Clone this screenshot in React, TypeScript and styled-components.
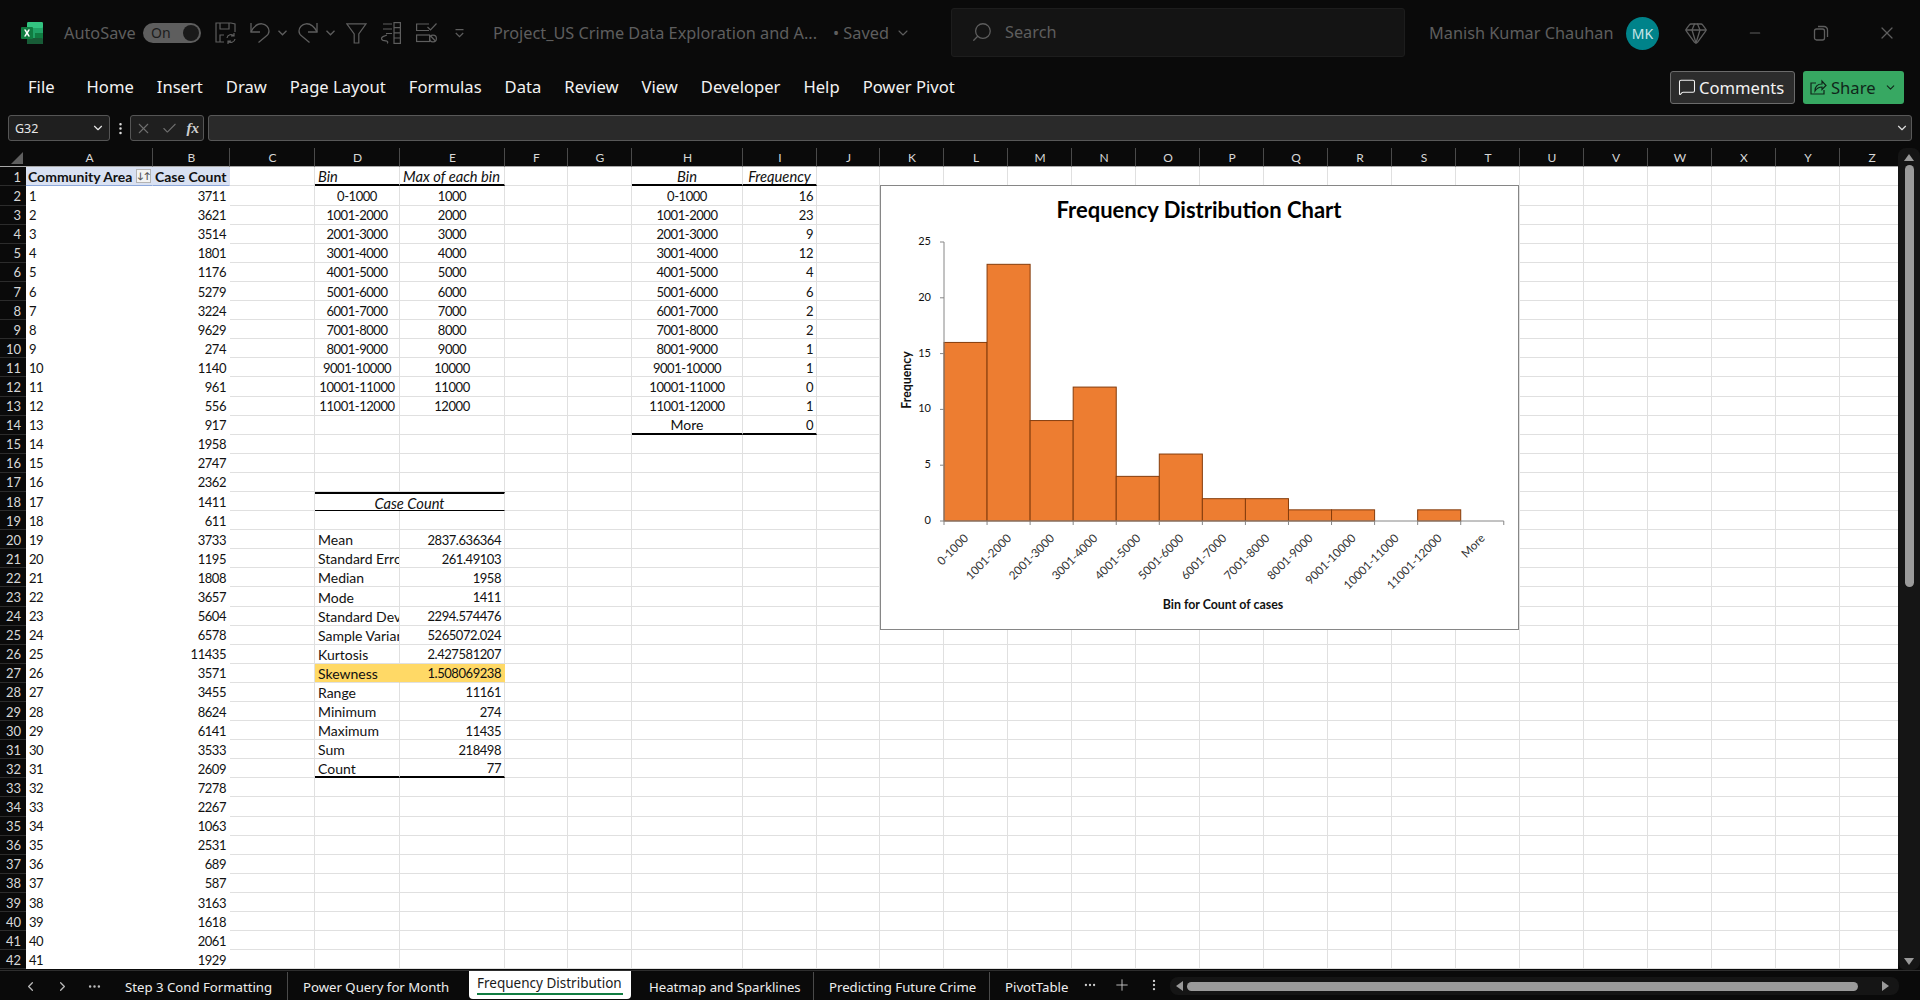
import React from 'react';
import styled, { createGlobalStyle } from 'styled-components';
import { ChevronDown, X, Check, Search, Minus, Plus, ChevronLeft, ChevronRight, MoreHorizontal, MoreVertical, Gem, MessageSquare } from 'lucide-react';

const UI_FONT = '"Noto Sans", "Open Sans", sans-serif';
const CELL_FONT = 'Lato, "Open Sans", sans-serif';

const GlobalStyle = createGlobalStyle`
  html, body {
    margin: 0;
    padding: 0;
    background: #0a0a0a;
    overflow: hidden;
  }
  * { box-sizing: border-box; }
`;

const Root = styled.div`
  width: 1920px;
  height: 1000px;
  background: #0a0a0a;
  display: flex;
  flex-direction: column;
  font-family: ${UI_FONT};
  overflow: hidden;
`;

/* title bar */
const TitleBar = styled.div`
  height: 66px;
  display: flex;
  align-items: center;
  color: #5e5e5e;
  font-size: 16.3px;
  padding-left: 21px;
`;

const AutoSave = styled.span`
  margin-left: 21px;
  width: 79px;
  white-space: nowrap;
`;

const Toggle = styled.div`
  width: 58px;
  height: 20px;
  border-radius: 10px;
  background: #5e5e5e;
  color: #1c1c1c;
  font-size: 14px;
  line-height: 20px;
  padding-left: 8px;
  position: relative;
`;

const Knob = styled.span`
  position: absolute;
  right: 2px;
  top: 2px;
  width: 16px;
  height: 16px;
  border-radius: 50%;
  background: #1a1a1a;
`;

const QuickIcons = styled.div`
  display: flex;
  align-items: center;
  margin-left: 14px;
  width: 278px;
`;

const QuickSlot = styled.span<{ $w: number }>`
  width: ${(p) => p.$w}px;
  display: flex;
  align-items: center;
`;

const DocTitle = styled.span`
  width: 340px;
  white-space: nowrap;
`;

const SavedLabel = styled.span`
  width: 62px;
  white-space: nowrap;
`;

const SearchBox = styled.div`
  margin-left: 40px;
  margin-bottom: 1px;
  width: 454px;
  height: 49px;
  background: #141414;
  border: 1px solid #1d1d1d;
  border-radius: 3px;
  display: flex;
  align-items: center;
  gap: 12px;
  padding: 0 0 2px 19px;
`;

const UserName = styled.span`
  margin-left: 24px;
  width: 197px;
  white-space: nowrap;
`;

const Avatar = styled.div`
  width: 33px;
  height: 33px;
  border-radius: 50%;
  background: #00838a;
  color: #c9e6e8;
  display: flex;
  align-items: center;
  justify-content: center;
  font-size: 14px;
`;

const WindowIcons = styled.div`
  display: flex;
  align-items: center;
  margin-left: 25px;
`;

const WindowSlot = styled.span<{ $w: number }>`
  width: ${(p) => p.$w}px;
  display: flex;
  align-items: center;
`;

/* ribbon tabs */
const RibbonBar = styled.div`
  height: 42px;
  display: flex;
  align-items: center;
  padding-left: 28px;
  color: #f2f2f2;
  font-size: 16.6px;
`;

const RibbonTab = styled.span<{ $first?: boolean }>`
  margin-right: ${(p) => (p.$first ? 32 : 23)}px;
  margin-bottom: 1px;
  white-space: nowrap;
`;

const RibbonActions = styled.div`
  margin-left: auto;
  display: flex;
  gap: 8px;
  padding-right: 16px;
`;

const CommentsButton = styled.div`
  width: 125px;
  height: 33px;
  border: 1px solid #6b6b6b;
  border-radius: 3px;
  background: #2c2c2c;
  color: #f2f2f2;
  display: flex;
  align-items: center;
  gap: 3px;
  padding-left: 7px;
  font-size: 16.6px;
`;

const ShareButton = styled.div`
  width: 101px;
  height: 33px;
  border-radius: 3px;
  background: #37a862;
  color: #10261a;
  display: flex;
  align-items: center;
  gap: 4px;
  padding-left: 7px;
  font-size: 16.6px;
`;

const ShareLabel = styled.span`
  width: 49px;
`;

/* formula bar */
const FormulaRow = styled.div`
  height: 26px;
  margin-top: 7px;
  display: flex;
  align-items: stretch;
  padding-left: 8px;
  padding-right: 8px;
`;

const NameBox = styled.div`
  width: 102px;
  background: #1f1f1f;
  border: 1px solid #555;
  border-radius: 3px;
  color: #e6e6e6;
  font-size: 12.5px;
  display: flex;
  align-items: center;
  justify-content: space-between;
  padding: 0 4px 0 6px;
`;

const Kebab = styled.div`
  width: 20px;
  color: #ddd;
  display: flex;
  align-items: center;
  justify-content: center;
`;

const FxBox = styled.div`
  width: 74px;
  background: #1f1f1f;
  border: 1px solid #555;
  border-radius: 3px;
  display: flex;
  align-items: center;
  justify-content: space-between;
  padding: 0 4px 0 4px;
  color: #6f6f6f;
`;

const FxLabel = styled.span`
  font-family: "Liberation Serif", serif;
  font-style: italic;
  font-weight: 700;
  font-size: 15px;
  color: #cfcfcf;
`;

const FormulaInput = styled.div`
  flex: 1;
  margin-left: 4px;
  background: #2a2a2a;
  border: 1px solid #585858;
  border-radius: 3px;
  color: #ddd;
  display: flex;
  align-items: center;
  justify-content: flex-end;
  padding-right: 2px;
`;

/* sheet */
const SheetWrap = styled.div`
  margin-top: 7px;
  height: 822px;
  display: flex;
`;

const SheetArea = styled.div`
  width: 1898px;
  position: relative;
  overflow: hidden;
`;

const Scrollbar = styled.div`
  width: 22px;
  display: flex;
  flex-direction: column;
  align-items: center;
  background: #151515;
  border-radius: 8px;
  padding-top: 6px;
  height: 822px;
`;

const ScrollThumb = styled.div`
  width: 9px;
  height: 422px;
  margin-top: 4px;
  background: #9a9a9a;
  border-radius: 5px;
`;

const ScrollArrow = styled.span<{ $down?: boolean }>`
  width: 0;
  height: 0;
  border-left: 5px solid transparent;
  border-right: 5px solid transparent;
  ${(p) => (p.$down ? 'border-top: 7px solid #999; margin-top: auto; margin-bottom: 5px;' : 'border-bottom: 7px solid #999;')}
`;

const Grid = styled.div`
  display: grid;
  width: max-content;
  grid-template-columns: 26px 127px 77px 85px 85px 105px 63px 64px 111px 74px 63px repeat(16, 64px);
  grid-template-rows: 19.4px repeat(42, 19.1px);
  font-family: ${CELL_FONT};
  font-size: 14px;
  color: #111;
  background: #fff;
`;

const Corner = styled.div`
  background: #0a0a0a;
  border-bottom: 1px solid #a8a8a8;
  position: relative;
`;

const CornerMark = styled.span`
  position: absolute;
  right: 3px;
  bottom: 2px;
  width: 0;
  height: 0;
  border-left: 12px solid transparent;
  border-bottom: 12px solid #5f5f5f;
`;

const ColHead = styled.div`
  background: #0a0a0a;
  border-bottom: 1px solid #a8a8a8;
  border-right: 1px solid #4a4a4a;
  color: #d8d8d8;
  font-size: 12px;
  padding-left: 1px;
  display: flex;
  align-items: center;
  justify-content: center;
`;

const RowHead = styled.div`
  background: #0a0a0a;
  border-bottom: 1px solid #2c2c2c;
  color: #d8d8d8;
  font-size: 13px;
  display: flex;
  align-items: center;
  justify-content: flex-end;
  padding: 1px 5px 0 0;
`;

type Align = 'left' | 'right' | 'center';

const Cell = styled.div<{
  $align?: Align;
  $plain?: boolean;
  $fill?: string;
  $top?: number;
  $bottom?: number;
  $italic?: boolean;
  $bold?: boolean;
  $num?: boolean;
  $span?: number;
}>`
  position: relative;
  display: flex;
  align-items: center;
  padding: 1px 3px 0;
  overflow: hidden;
  white-space: nowrap;
  grid-column: span ${(p) => p.$span ?? 1};
  justify-content: ${(p) => (p.$align === 'right' ? 'flex-end' : p.$align === 'center' ? 'center' : 'flex-start')};
  background: ${(p) => p.$fill ?? '#fff'};
  font-size: ${(p) => (p.$num ? '13px' : p.$italic ? '14.7px' : '14px')};
  letter-spacing: ${(p) => (p.$num ? '-0.45px' : 'normal')};
  font-style: ${(p) => (p.$italic ? 'italic' : 'normal')};
  font-weight: ${(p) => (p.$bold ? 700 : 400)};
  border-right: 1px solid ${(p) => (p.$plain || p.$fill ? 'transparent' : '#e0e0e0')};
  border-bottom: ${(p) => (p.$bottom ? `${p.$bottom}px solid #000` : `1px solid ${p.$plain ? 'transparent' : '#e0e0e0'}`)};
  ${(p) => (p.$top ? `border-top: ${p.$top}px solid #000;` : '')}
`;

const HeaderCell = styled(Cell)`
  background: #d9e1f2;
  border-bottom: 1px solid #8ea9db;
  padding-left: 2px;
`;

const SortButton = styled.span`
  position: absolute;
  right: 1px;
  top: 2px;
  width: 15px;
  height: 14px;
  background: #f3f3f3;
  border: 1px solid #b4b4b4;
  color: #555;
  font-size: 9px;
  line-height: 11px;
  text-align: center;
`;

/* chart */
const ChartFrame = styled.div`
  position: absolute;
  left: 880px;
  top: 37px;
  width: 639px;
  height: 445px;
  background: #fff;
  border: 1px solid #868686;
`;

/* sheet tabs */
const TabBar = styled.div`
  height: 30px;
  display: flex;
  align-items: flex-start;
  color: #eee;
  font-size: 13.2px;
  border-top: 1px solid #2e2e2e;
`;

const NavButtons = styled.div`
  width: 125px;
  height: 30px;
  display: flex;
  align-items: center;
  color: #bbb;
  padding-left: 23px;
  gap: 17px;
`;

const SheetTab = styled.span<{ $w: number; $divider?: boolean }>`
  width: ${(p) => p.$w}px;
  height: 28px;
  padding-top: 2px;
  margin-top: 1px;
  display: flex;
  align-items: center;
  white-space: nowrap;
  overflow: hidden;
  position: relative;
  ${(p) => (p.$divider ? 'border-right: 1px solid #4a4a4a;' : '')}
`;

const TabGap = styled.span<{ $w: number }>`
  width: ${(p) => p.$w}px;
`;

const ActiveTab = styled.div`
  width: 162px;
  height: 28px;
  background: #fff;
  color: #1a1a1a;
  border-radius: 0 0 4px 4px;
  padding: 0 8px;
  margin: 0 18px 0 18px;
  display: flex;
  flex-direction: column;
  align-items: stretch;
  font-size: 13.5px;
  white-space: nowrap;
`;

const ActiveLabel = styled.span`
  height: 22px;
  padding-top: 2px;
  line-height: 20px;
`;

const ActiveLine = styled.span`
  height: 2px;
  background: #107c41;
`;

const TabTools = styled.div`
  width: 101px;
  height: 28px;
  display: flex;
  align-items: center;
  color: #ccc;
  padding-left: 14px;
  gap: 16px;
`;

const HScroll = styled.div`
  width: 729px;
  height: 18px;
  margin-top: 6px;
  background: #151515;
  border-radius: 8px;
  display: flex;
  align-items: center;
  padding: 0 10px 0 6px;
`;

const HArrow = styled.span<{ $right?: boolean }>`
  width: 0;
  height: 0;
  border-top: 5px solid transparent;
  border-bottom: 5px solid transparent;
  ${(p) => (p.$right ? 'border-left: 7px solid #999; margin-left: auto;' : 'border-right: 7px solid #999;')}
`;

const HThumb = styled.span`
  width: 671px;
  height: 9px;
  margin-left: 4px;
  background: #9a9a9a;
  border-radius: 5px;
`;

const COLS = 'ABCDEFGHIJKLMNOPQRSTUVWXYZ'.split('');
const RIBBON = ['Home', 'Insert', 'Draw', 'Page Layout', 'Formulas', 'Data', 'Review', 'View', 'Developer', 'Help', 'Power Pivot'];
const CASES = [3711, 3621, 3514, 1801, 1176, 5279, 3224, 9629, 274, 1140, 961, 556, 917, 1958, 2747, 2362, 1411, 611, 3733, 1195, 1808, 3657, 5604, 6578, 11435, 3571, 3455, 8624, 6141, 3533, 2609, 7278, 2267, 1063, 2531, 689, 587, 3163, 1618, 2061, 1929];
const BINS = ['0-1000', '1001-2000', '2001-3000', '3001-4000', '4001-5000', '5001-6000', '6001-7000', '7001-8000', '8001-9000', '9001-10000', '10001-11000', '11001-12000'];
const FREQ = [16, 23, 9, 12, 4, 6, 2, 2, 1, 1, 0, 1, 0];
const STATS: [string, string][] = [
  ['Mean', '2837.636364'],
  ['Standard Error', '261.49103'],
  ['Median', '1958'],
  ['Mode', '1411'],
  ['Standard Deviation', '2294.574476'],
  ['Sample Variance', '5265072.024'],
  ['Kurtosis', '2.427581207'],
  ['Skewness', '1.508069238'],
  ['Range', '11161'],
  ['Minimum', '274'],
  ['Maximum', '11435'],
  ['Sum', '218498'],
  ['Count', '77'],
];

const ExcelLogo = () => (
  <svg width="22" height="22" viewBox="0 0 22 22">
    <rect x="6" y="0" width="16" height="22" rx="1.5" fill="#21a366" />
    <rect x="6" y="0" width="16" height="6" rx="1.5" fill="#33c481" />
    <rect x="14" y="11" width="8" height="5.5" fill="#107c41" />
    <rect x="6" y="16" width="16" height="6" rx="1" fill="#185c37" />
    <rect x="0" y="5" width="12" height="12" rx="1" fill="#107c41" />
    <path d="M3 7.5h1.8L6 9.8l1.2-2.3H9l-2 3.5 2 3.5H7.2L6 12.2l-1.2 2.3H3l2-3.5z" fill="#fff" />
  </svg>
);

const SaveIcon = () => (
  <svg width="22" height="22" viewBox="0 0 22 22" fill="none" stroke="#5e5e5e" strokeWidth="1.2">
    <path d="M9 20H1V1h15l4 1v8" />
    <path d="M5 1v6h9V1M5 20v-7h4" />
    <path d="M12 16a4 4 0 0 1 7-2M20 17a4 4 0 0 1-7 2M19 11v3h-3M13 22v-3h3" />
  </svg>
);

const UndoIcon = () => (
  <svg width="20" height="20" viewBox="0 0 20 20" fill="none" stroke="#5e5e5e" strokeWidth="1.3">
    <path d="M1 0v9h9" />
    <path d="M1 9C4 3 8 .5 12 .8c4 .4 7 3.6 7 7.2 0 2-1 3.8-3 5.2L8.5 19.5" />
  </svg>
);

const RedoIcon = () => (
  <svg width="20" height="20" viewBox="0 0 20 20" fill="none" stroke="#5e5e5e" strokeWidth="1.3">
    <path d="M19 0v9h-9" />
    <path d="M19 9C16 3 12 .5 8 .8 4 1.2 1 4.4 1 8c0 2 1 3.8 3 5.2l7.5 6.3" />
  </svg>
);

const SmallChevron = () => (
  <svg width="9" height="6" viewBox="0 0 9 6" fill="none" stroke="#5e5e5e" strokeWidth="1.3">
    <path d="M.5 .8L4.5 4.8 8.5 .8" />
  </svg>
);

const FunnelIcon = () => (
  <svg width="21" height="21" viewBox="0 0 21 21" fill="none" stroke="#5e5e5e" strokeWidth="1.2">
    <path d="M.8 .8H20L12.8 11v9H8.2v-9z" />
  </svg>
);

const BarsIcon = () => (
  <svg width="21" height="22" viewBox="0 0 21 22" fill="none" stroke="#5e5e5e" strokeWidth="1.2">
    <path d="M3 2h9M3 7h9M6 11.5h6" />
    <rect x="14" y="0.6" width="6.4" height="20.8" />
    <path d="M14 5.6h6.4M14 10.8h6.4M14 16h6.4" />
    <path d="M7 13l-4 1.6c-2 1-2 3 0 3.8l4 .8c1 .4 1 1.4 0 2" />
  </svg>
);

const ListIcon = () => (
  <svg width="21" height="20" viewBox="0 0 21 20" fill="none" stroke="#5e5e5e" strokeWidth="1.2">
    <path d="M13 1H.6v6.5H13" />
    <path d="M11.5 4l3 3 6-6.5" />
    <rect x=".6" y="12" width="13" height="6.5" />
    <circle cx="17" cy="15.5" r="3.4" />
    <path d="M14.6 13l4.8 5" />
  </svg>
);

const CustomizeIcon = () => (
  <svg width="9" height="9" viewBox="0 0 9 9" fill="none" stroke="#5e5e5e" strokeWidth="1.2">
    <path d="M.5 .6h8M.8 4l3.7 3.7L8.2 4" />
  </svg>
);

const RestoreIcon = () => (
  <svg width="16" height="16" viewBox="0 0 16 16" fill="none" stroke="#5e5e5e" strokeWidth="1.3">
    <rect x="1.5" y="4" width="10" height="11" rx="2" />
    <path d="M5 1.5h6a3.5 3.5 0 0 1 3.5 3.5v7" />
  </svg>
);

const ShareIcon = () => (
  <svg width="17" height="20" viewBox="0 0 17 20" fill="none" stroke="#10261a" strokeWidth="1.2">
    <path d="M6 6H1v11h13v-4" />
    <path d="M5 14c0-5 3-7 7-7V4l4 4.5-4 4V10c-3 0-5 1-7 4z" />
  </svg>
);

const PLOT_LEFT = 63;
const PLOT_BOTTOM = 335;
const CAT_W = 43.06;
const UNIT_H = 11.16;

const FrequencyChart = () => (
  <ChartFrame>
    <svg width="637" height="443" fontFamily={CELL_FONT}>
      <text x="318" y="32" textAnchor="middle" fontSize="22" fontWeight="700" fill="#000">Frequency Distribution Chart</text>
      {FREQ.map((f, i) =>
        f > 0 ? (
          <rect
            key={i}
            x={PLOT_LEFT + i * CAT_W}
            y={PLOT_BOTTOM - f * UNIT_H}
            width={CAT_W}
            height={f * UNIT_H}
            fill="#ed7d31"
            stroke="#843c0c"
            strokeWidth="1"
          />
        ) : null
      )}
      <path d={`M${PLOT_LEFT} ${PLOT_BOTTOM - 25 * UNIT_H}V${PLOT_BOTTOM}H${PLOT_LEFT + 13 * CAT_W}`} stroke="#868686" fill="none" />
      {[0, 5, 10, 15, 20, 25].map((v) => (
        <g key={v}>
          <path d={`M${PLOT_LEFT - 4} ${PLOT_BOTTOM - v * UNIT_H}H${PLOT_LEFT}`} stroke="#868686" />
          <text x={PLOT_LEFT - 13} y={PLOT_BOTTOM - v * UNIT_H + 3} textAnchor="end" fontSize="11" fill="#111">{v}</text>
        </g>
      ))}
      {Array.from({ length: 14 }).map((_, i) => (
        <path key={i} d={`M${PLOT_LEFT + i * CAT_W} ${PLOT_BOTTOM}v4`} stroke="#868686" />
      ))}
      {[...BINS, 'More'].map((b, i) => {
        const x = PLOT_LEFT + i * CAT_W + 25;
        const y = PLOT_BOTTOM + 18;
        return (
          <text key={b} x={x} y={y} textAnchor="end" fontSize="11.7" fill="#333" transform={`rotate(-45 ${x} ${y})`}>
            {b}
          </text>
        );
      })}
      <text x="342" y="423" textAnchor="middle" fontSize="12.4" fontWeight="700" fill="#111">Bin for Count of cases</text>
      <text x="30" y="194" textAnchor="middle" fontSize="12.3" fontWeight="700" fill="#111" transform="rotate(-90 30 194)">Frequency</text>
    </svg>
  </ChartFrame>
);

const renderRow = (row: number) => {
  const cells: React.ReactNode[] = [];
  // A and B hold the pivot table, their fill hides the gridlines
  if (row === 1) {
    cells.push(
      <HeaderCell key="a" $plain $bold>
        Community Area
        <SortButton>↓↑</SortButton>
      </HeaderCell>,
      <HeaderCell key="b" $plain $bold>Case Count</HeaderCell>
    );
  } else {
    cells.push(
      <Cell key="a" $plain $num>{row - 1}</Cell>,
      <Cell key="b" $plain $num $align="right">{CASES[row - 2]}</Cell>
    );
  }
  cells.push(<Cell key="c" />);

  // D and E
  if (row === 1) {
    cells.push(
      <Cell key="d" $italic $bottom={2}>Bin</Cell>,
      <Cell key="e" $italic $bottom={2}>Max of each bin</Cell>
    );
  } else if (row <= 13) {
    cells.push(
      <Cell key="d" $num $align="center">{BINS[row - 2]}</Cell>,
      <Cell key="e" $num $align="center">{(row - 1) * 1000}</Cell>
    );
  } else if (row === 18) {
    cells.push(<Cell key="d" $span={2} $italic $align="center" $top={2} $bottom={1}>Case Count</Cell>);
  } else if (row >= 20 && row <= 32) {
    const [label, value] = STATS[row - 20];
    const fill = label === 'Skewness' ? '#ffd966' : undefined;
    const bottom = row === 32 ? 2 : undefined;
    cells.push(
      <Cell key="d" $fill={fill} $bottom={bottom}>{label}</Cell>,
      <Cell key="e" $num $fill={fill} $bottom={bottom} $align="right">{value}</Cell>
    );
  } else {
    cells.push(<Cell key="d" />, <Cell key="e" />);
  }
  cells.push(<Cell key="f" />, <Cell key="g" />);

  // H and I
  if (row === 1) {
    cells.push(
      <Cell key="h" $italic $align="center" $bottom={2}>Bin</Cell>,
      <Cell key="i" $italic $align="center" $bottom={2}>Frequency</Cell>
    );
  } else if (row <= 14) {
    const i = row - 2;
    const bottom = row === 14 ? 2 : undefined;
    cells.push(
      i < BINS.length
        ? <Cell key="h" $num $align="center" $bottom={bottom}>{BINS[i]}</Cell>
        : <Cell key="h" $align="center" $bottom={bottom}>More</Cell>,
      <Cell key="i" $num $align="right" $bottom={bottom}>{FREQ[i]}</Cell>
    );
  } else {
    cells.push(<Cell key="h" />, <Cell key="i" />);
  }

  COLS.slice(9).forEach((c) => cells.push(<Cell key={c} />));
  return cells;
};

export default function App() {
  return (
    <Root>
      <GlobalStyle />
      <TitleBar>
        <ExcelLogo />
        <AutoSave>AutoSave</AutoSave>
        <Toggle>
          On
          <Knob />
        </Toggle>
        <QuickIcons>
          <QuickSlot $w={35}><SaveIcon /></QuickSlot>
          <QuickSlot $w={28}><UndoIcon /></QuickSlot>
          <QuickSlot $w={20}><SmallChevron /></QuickSlot>
          <QuickSlot $w={28}><RedoIcon /></QuickSlot>
          <QuickSlot $w={20}><SmallChevron /></QuickSlot>
          <QuickSlot $w={34}><FunnelIcon /></QuickSlot>
          <QuickSlot $w={36}><BarsIcon /></QuickSlot>
          <QuickSlot $w={39}><ListIcon /></QuickSlot>
          <QuickSlot $w={38}><CustomizeIcon /></QuickSlot>
        </QuickIcons>
        <DocTitle>Project_US Crime Data Exploration and A...</DocTitle>
        <SavedLabel>• Saved</SavedLabel>
        <ChevronDown size={16} strokeWidth={1.6} />
        <SearchBox>
          <Search size={22} strokeWidth={1.4} style={{ transform: 'scaleX(-1)' }} />
          Search
        </SearchBox>
        <UserName>Manish Kumar Chauhan</UserName>
        <Avatar>MK</Avatar>
        <WindowIcons>
          <WindowSlot $w={63}><Gem size={24} strokeWidth={1.3} /></WindowSlot>
          <WindowSlot $w={66}><Minus size={16} strokeWidth={1.8} /></WindowSlot>
          <WindowSlot $w={64}><RestoreIcon /></WindowSlot>
          <WindowSlot $w={20}><X size={20} strokeWidth={1.5} /></WindowSlot>
        </WindowIcons>
      </TitleBar>
      <RibbonBar>
        <RibbonTab $first>File</RibbonTab>
        {RIBBON.map((t) => (
          <RibbonTab key={t}>{t}</RibbonTab>
        ))}
        <RibbonActions>
          <CommentsButton><MessageSquare size={18} strokeWidth={1.4} />Comments</CommentsButton>
          <ShareButton>
            <ShareIcon />
            <ShareLabel>Share</ShareLabel>
            <ChevronDown size={13} />
          </ShareButton>
        </RibbonActions>
      </RibbonBar>
      <FormulaRow>
        <NameBox>G32<ChevronDown size={14} /></NameBox>
        <Kebab><MoreVertical size={15} /></Kebab>
        <FxBox>
          <X size={17} strokeWidth={1.5} />
          <Check size={17} strokeWidth={1.5} />
          <FxLabel>fx</FxLabel>
        </FxBox>
        <FormulaInput><ChevronDown size={14} /></FormulaInput>
      </FormulaRow>
      <SheetWrap>
        <SheetArea>
          <Grid>
            <Corner><CornerMark /></Corner>
            {COLS.map((c) => (
              <ColHead key={c}>{c}</ColHead>
            ))}
            {Array.from({ length: 42 }).map((_, i) => (
              <React.Fragment key={i}>
                <RowHead>{i + 1}</RowHead>
                {renderRow(i + 1)}
              </React.Fragment>
            ))}
          </Grid>
          <FrequencyChart />
        </SheetArea>
        <Scrollbar>
          <ScrollArrow />
          <ScrollThumb />
          <ScrollArrow $down />
        </Scrollbar>
      </SheetWrap>
      <TabBar>
        <NavButtons>
          <ChevronLeft size={15} />
          <ChevronRight size={15} />
          <MoreHorizontal size={15} />
        </NavButtons>
        <SheetTab $w={163} $divider>Step 3 Cond Formatting</SheetTab>
        <TabGap $w={15} />
        <SheetTab $w={148}>Power Query for Month</SheetTab>
        <ActiveTab>
          <ActiveLabel>Frequency Distribution</ActiveLabel>
          <ActiveLine />
        </ActiveTab>
        <SheetTab $w={165} $divider>Heatmap and Sparklines</SheetTab>
        <TabGap $w={15} />
        <SheetTab $w={161} $divider>Predicting Future Crime</SheetTab>
        <TabGap $w={15} />
        <SheetTab $w={64}>PivotTable</SheetTab>
        <TabTools>
          <MoreHorizontal size={14} />
          <Plus size={18} strokeWidth={1.2} />
          <MoreVertical size={14} />
        </TabTools>
        <HScroll>
          <HArrow />
          <HThumb />
          <HArrow $right />
        </HScroll>
      </TabBar>
    </Root>
  );
}
